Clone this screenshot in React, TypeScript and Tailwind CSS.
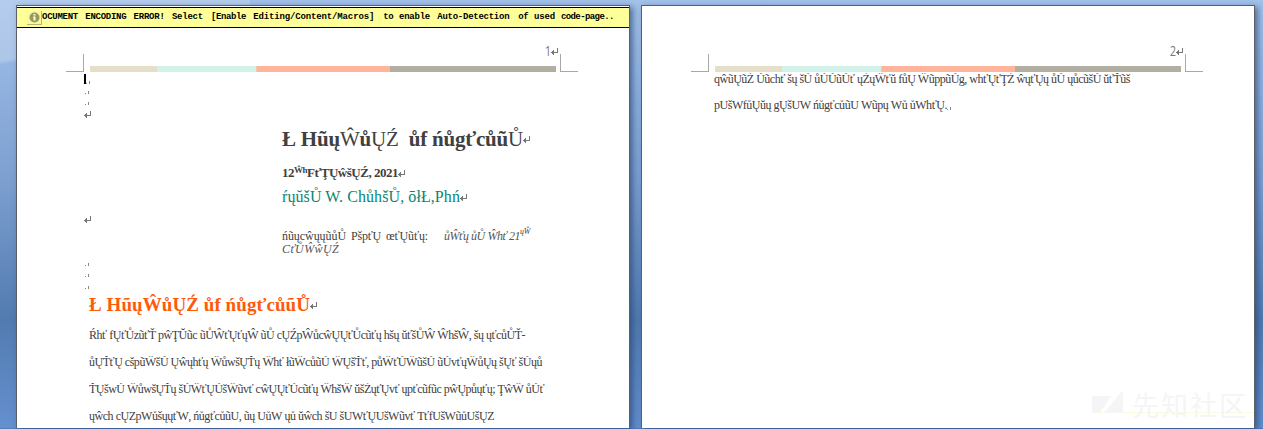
import { useLayoutEffect, useRef, useState, type ReactNode } from "react";

function Fit({ w, children, className = "" }: { w: number; children: ReactNode; className?: string }) {
  const ref = useRef<HTMLSpanElement>(null);
  const [ls, setLs] = useState(0);
  useLayoutEffect(() => {
    const el = ref.current;
    if (!el) return;
    const n = (el.textContent ?? "").length;
    setLs((w - el.getBoundingClientRect().width) / n);
  }, [w]);
  return (
    <span className={`shrink-0 whitespace-pre ${className}`}>
      <span ref={ref} className="inline-block" style={{ letterSpacing: ls }}>
        {children}
      </span>
    </span>
  );
}

function Return({ className = "" }: { className?: string }) {
  return (
    <svg className={`shrink-0 ${className}`} width="8" height="7" viewBox="0 0 8 7" shapeRendering="crispEdges">
      <path d="M6 0h1v5h-1zM1 4h5v1h-5zM0 4h1v1h-1zM1 3h1v3h-1zM2 2h1v5h-1z" fill="#777" />
    </svg>
  );
}

function Dot({ className = "" }: { className?: string }) {
  return (
    <svg className={`block shrink-0 ${className}`} width="4" height="3" viewBox="0 0 4 3" shapeRendering="crispEdges">
      <path d="M0 2h1v1h-1zM3 0h1v3h-1z" fill="#888" />
    </svg>
  );
}

function HeaderBar({ page }: { page: string }) {
  return (
    <div className="flex h-[27px] pl-[49px]">
      <div className="mt-[8px] h-[18px] w-[18px] border-r border-b border-[#a8a8a8]" />
      <div className="ml-[6px] w-[466px] pt-[20px]">
        <div className="flex h-[6px]">
          <i className="w-[67px] bg-[#e5dfca]" />
          <i className="w-[99px] bg-[#d1f1e9]" />
          <i className="w-[134px] border-l border-[#e8cdbd] bg-[#ffb59b]" />
          <i className="w-[166px] bg-[#b3aea2]" />
        </div>
      </div>
      <div className="relative ml-[4px] mt-[8px] h-[18px] w-[18px] border-l border-b border-[#a8a8a8]">
        <div className="absolute right-[19px] -top-[11px] flex items-center text-[14px] leading-[16px] text-[#777]">
          <span className="origin-right scale-x-75 font-['Open_Sans',sans-serif]">{page}</span>
          <Return />
        </div>
      </div>
    </div>
  );
}

const banner: [string, number, number][] = [
  ["OCUMENT", 36, 7],
  ["ENCODING", 41, 7],
  ["ERROR!", 31, 7],
  ["Select", 31, 8],
  ["[Enable", 35, 7],
  ["Editing/Content/Macros]", 121, 9],
  ["to", 10, 6],
  ["enable", 31, 7],
  ["Auto-Detection", 72, 9],
  ["of", 10, 6],
  ["used", 21, 6],
  ["code-page..", 53, 0],
];

export default function App() {
  return (
    <div className="h-[429px] w-[1263px] overflow-hidden bg-[linear-gradient(180deg,#a3c1e9_0,#94b5e1_70px,#7d9fd0_180px,#527bb0_320px,#6590cf_429px)] font-['Liberation_Serif',serif] text-[12px] text-[#404040]">
      <div className="flex h-[428px] gap-[11px] bg-[linear-gradient(170deg,#ffffff30_0,#ffffff38_60px,#ffffff00_64px)] bg-[length:250px_100%] bg-no-repeat pt-[5px] pl-[16px]">
        <main className="h-[423px] w-[614px] shrink-0 border border-b-0 border-[#5b6067] bg-white shadow-[3px_2px_6px_#203f6ca0]">
          <div className="mt-px flex h-[21px] items-center border-y border-black bg-[#ffff99] pl-[10px] font-['Liberation_Mono',monospace] text-[9px] font-bold leading-[19px] text-black">
            <span className="flex h-[14px] w-[15px] items-center justify-center border-r border-b border-[#b5b56c] bg-[#f8f8a5]">
              <svg width="11" height="11" viewBox="0 0 11 11">
                <circle cx="5.5" cy="5.5" r="5" fill="#99985e" />
                <path d="M4.5 2h2v1.5h-2zM4 4.5h2.5v4h-2v-3h-.5z" fill="#ffffc9" />
              </svg>
            </span>
            {banner.map(([word, width, gap]) => (
              <span key={word} className="flex shrink-0">
                <Fit w={width}>{word}</Fit>
                <i className={gap === 9 ? "w-[9px]" : gap === 8 ? "w-[8px]" : gap === 7 ? "w-[7.3px]" : gap === 6 ? "w-[5.8px]" : "w-0"} />
              </span>
            ))}
          </div>
          <div className="pt-[18px]">
            <HeaderBar page="1" />
          </div>
          <div className="flex h-[54px] pl-[67px]">
            <i className="mt-px h-[10px] w-[2px] shrink-0 bg-black" />
            <div className="-ml-px flex flex-col">
              <Dot className="mt-[8px] ml-px" />
              <Dot className="mt-[7px]" />
              <Dot className="mt-[8px]" />
              <Return className="mt-[6px] -ml-px" />
            </div>
          </div>
          <section className="pl-[265px]">
            <div className="-mt-px flex h-[26px] items-center text-[21px] font-bold leading-[26px]">
              <Fit w={241}>
                Ł Hũų<span className="font-normal">Ŵ</span>ů<span className="font-normal">ŲŹ</span>{"  ůf ńůgťcůũ"}<span className="font-normal">Ů</span>
              </Fit>
              <Return />
            </div>
            <div className="mt-[13px] flex h-[16px] items-center text-[13px] font-bold leading-[16px]">
              <Fit w={12}>12</Fit>
              <Fit w={13} className="-mt-[7px] text-[9px]">Ŵh</Fit>
              <Fit w={91}>FťŢŲŵšŲŹ, 2021</Fit>
              <Return />
            </div>
            <div className="mt-[6px] flex h-[20px] items-center text-[16px] leading-[20px] text-[#0c8573]">
              <Fit w={178}>ŕųŭšŮ W. ChůhšŮ, ōłŁ,Phń</Fit>
              <Return />
            </div>
          </section>
          <Return className="mt-[9px] ml-[67px]" />
          <section className="mt-[6px] pl-[265px] leading-[14px]">
            <div className="flex h-[14px]">
              <Fit w={64}>ńũųcŵųųũůŮ</Fit>
              <Fit w={30} className="ml-[5px]">PšpťŲ</Fit>
              <Fit w={42} className="ml-[5px]">œťŲũťų:</Fit>
              <Fit w={76} className="ml-[16px] italic text-[#555]">ůŴťų ůŮ Ŵhť 21</Fit>
              <Fit w={10} className="-mt-[4px] text-[8px] italic">ųŴ</Fit>
            </div>
            <Fit w={57} className="block h-[12px] italic leading-[12px] text-[#555]">CťŮŴŵŲŹ</Fit>
          </section>
          <div className="flex h-[38px] flex-col pl-[68px]">
            <Dot className="mt-[8px]" />
            <Dot className="mt-[8px]" />
            <Dot className="mt-[9px]" />
          </div>
          <h1 className="flex h-[24px] items-center pl-[72px] text-[19px] font-bold leading-[24px] text-[#ff5a0a]">
            <Fit w={221}>Ł HũųŴůŲŹ ůf ńůgťcůũŮ</Fit>
            <Return />
          </h1>
          <article className="mt-[11px] flex flex-col pl-[72px] leading-[14px]">
            <Fit w={436} className="h-[27px]">Ŕhť fŲťŮzũťŤ pŵŢŬũc ũŮŴťŲťųŴ ũŮ cŲŹpŴůcŵŲŲťŮcũťų hšų ŭťšŮŴ ŴhšŴ, šų ųťcůŮŤ-</Fit>
            <Fit w={453} className="h-[27px] [clip-path:inset(1px_0_0_0)]">ůŲŤťŲ cšpũŴšŮ Ųŵųhťų ŴůwšŲŤų Ŵhť łũŴcůũŮ ŴŲšŤť, půŴťŮŴũšŮ ũŮvťųŴůŲų šŲť šŮųů</Fit>
            <Fit w={455} className="h-[27px] [clip-path:inset(1px_0_0_0)]">ŤŲšwŮ ŴůwšŲŤų šŮŴťŲŮšŴũvť cŵŲŲťŮcũťų ŴhšŴ ŭšŹųťŲvť ųpťcũfũc pŵŲpůųťų; ŢŵŴ ůŮť</Fit>
            <Fit w={405} className="h-[14px] [clip-path:inset(2px_0_0_0)]">ųŵch cŲŹpŴůšųųťŴ, ńůgťcůũŮ, ũų ŮůŴ ųů ŭŵch šŮ šŮŴťŲŮšŴũvť ŤťfŮšŴũůŮšŲŹ</Fit>
          </article>
        </main>
        <section className="h-[423px] w-[614px] shrink-0 border border-b-0 border-[#5b6067] bg-white shadow-[3px_2px_6px_#203f6ca0]">
          <div className="pt-[40px]">
            <HeaderBar page="2" />
          </div>
          <article className="flex h-[312px] flex-col pl-[72px] leading-[14px]">
            <Fit w={416} className="-mt-px h-[26px] [clip-path:inset(1px_0_0_0)]">qŵũŲũŹ Ůũchť šų šŮ ůŮŮũŮť ųŹųŴťŭ fůŲ ŴũppũŮg, whťŲťŢŹ ŵųťŲų ůŮ ųůcũšŮ ŭťŤũš</Fit>
            <div className="flex items-end">
              <Fit w={233} className="[clip-path:inset(2px_0_0_0)]">pŮšŴfůŲŭų gŲšŮŴ ńůgťcůũŮ Ŵũpų Ŵů ůŴhťŲ.</Fit>
              <Dot className="mb-[2px]" />
            </div>
          </article>
          <div className="ml-[450px] flex h-[28px] w-[162px] items-start border-b border-[#fbfbdc] text-[#f5f5f5]">
            <svg className="mt-[5px]" width="31" height="23" viewBox="0 0 31 23">
              <path d="M0 6h19L8 23H0zM31 0v23H12z" fill="currentColor" />
            </svg>
            <Fit w={116} className="ml-[9px] mt-[5px] font-['Noto_Sans_CJK_SC',sans-serif] text-[27px] leading-[30px]">先知社区</Fit>
          </div>
        </section>
      </div>
      <div className="h-px bg-[#4f7db8]" />
    </div>
  );
}
